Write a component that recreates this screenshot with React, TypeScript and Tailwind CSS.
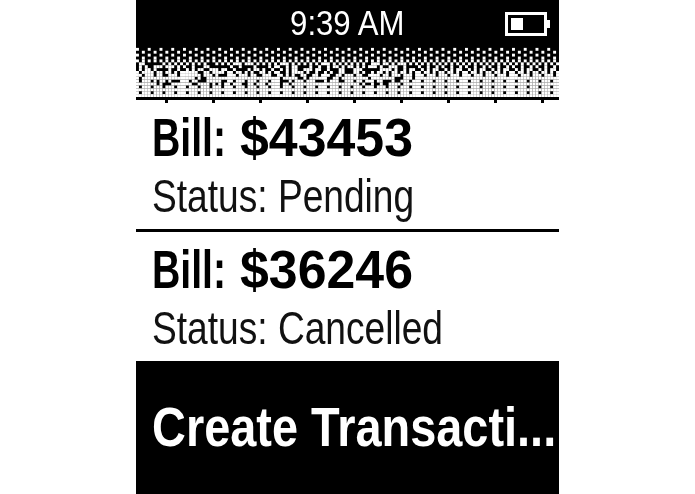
// 8 wide repeating dither rows, '#' is a lit pixel
const rows = [
   '........',
   '#...#...',
   '..#...#.',
   '#...#...',
   '..#...#.',
   '#.#.#.#.',
   '.#.#.#.#',
   '#..#..#.',
   '.#.#.##.',
   '#.##.#.#',
   '##.###.#',
   '########',
   '#.###.##',
   '########',
   '#.###.##',
   '########',
   '#.###.##',
   '########',
];

const ditherCells = () => {
   const cells: { x: number; y: number }[] = [];
   rows.forEach((row, y) => {
      for (let x = 0; x < 144; x++) {
         let lit = row[x % 8] === '#';
         // the title text smeared under the fade on the left side
         if (x < 95 && y > 5 && y < 14) {
            const noise = Math.sin(x * 12.9898 + y * 78.233) * 43758.5453;
            if (noise - Math.floor(noise) < 0.2) lit = !lit;
         }
         if (lit) cells.push({ x, y });
      }
   });
   return cells;
};

const Dither = () => (
   <svg viewBox="0 0 144 18" width={423} height={52} preserveAspectRatio="none" className="block">
      <rect width="144" height="18" fill="#000" />
      {ditherCells().map((c) => (
         <rect key={`${c.x}-${c.y}`} x={c.x} y={c.y} width="1" height="1" fill="#fff" />
      ))}
   </svg>
);

const Ticks = () => (
   <div className="h-[3px] flex justify-between pl-[29px] pr-[15px] -mb-[3px] relative">
      {Array.from({ length: 9 }).map((_, i) => (
         <div key={i} className="w-[3px] h-[3px] bg-black" />
      ))}
   </div>
);

const Battery = () => (
   <svg width="46" height="24" viewBox="0 0 46 24" className="block">
      <rect x="1.5" y="1.5" width="39" height="21" fill="none" stroke="#fff" strokeWidth="3" />
      <rect x="6" y="6" width="12" height="12" fill="#fff" />
      <rect x="42" y="8" width="3" height="8" fill="#fff" />
   </svg>
);

const Bill = ({ amount, status }: { amount: string; status: string }) => (
   <div className="h-[129px] pl-4 pt-[7px]">
      <div className="flex text-[53px] leading-[62px] font-bold text-black whitespace-nowrap">
         <span className="w-[88px] origin-left scale-x-[0.74]">Bill:</span>
         <span className="origin-left scale-x-[0.978]">{amount}</span>
      </div>
      <div className="text-[47px] leading-[54px] text-[#111] whitespace-nowrap origin-left scale-x-[0.79]">Status: {status}</div>
   </div>
);

export default function App() {
   return (
      <div className="h-[494px] flex justify-center bg-white font-['Liberation_Sans',sans-serif]">
         <div className="w-[423px] flex flex-col overflow-hidden blur-[0.6px]">
            <div className="h-[45px] bg-black relative flex items-center justify-center">
               <span className="text-[35px] leading-none text-white scale-x-[0.89]">9:39 AM</span>
               <div className="absolute right-[8px] top-[12px]">
                  <Battery />
               </div>
            </div>
            <Dither />
            <div className="h-[3px] bg-black" />
            <Ticks />
            <Bill amount="$43453" status="Pending" />
            <div className="h-[3px] bg-black" />
            <Bill amount="$36246" status="Cancelled" />
            <div className="flex-1 bg-black flex items-center pl-4">
               <span className="text-[55px] font-bold text-white whitespace-nowrap origin-left scale-x-[0.853]">Create Transacti...</span>
            </div>
         </div>
      </div>
   );
}
